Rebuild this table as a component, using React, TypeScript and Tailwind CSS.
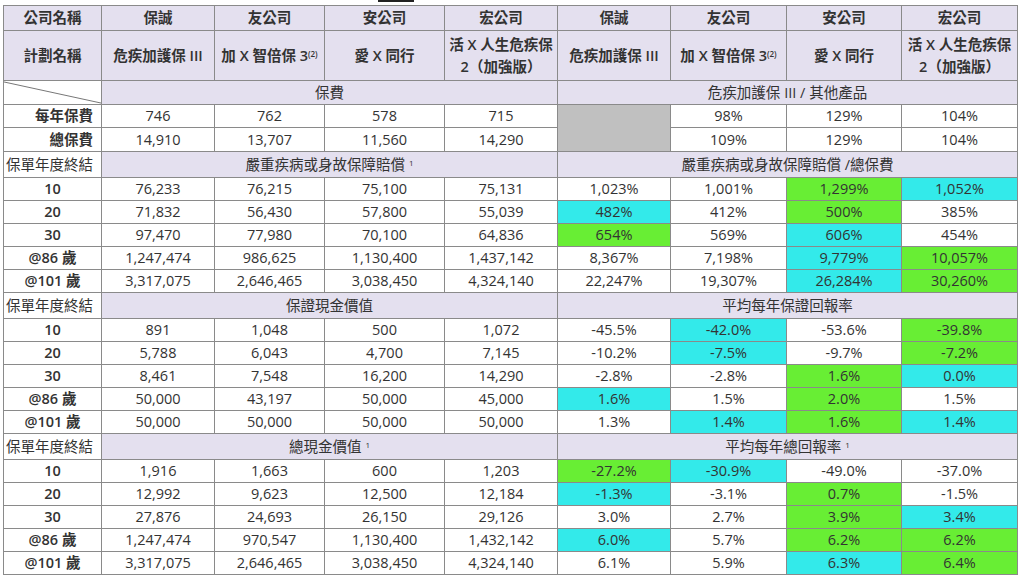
import React from "react";

type Tone = "c" | "g" | "";
type Row = { label: string; left: string[]; right: [string, Tone][] };

const CYAN = "bg-[#33eaea]";
const GREEN = "bg-[#68ee34]";

const sections: { title: string; rightTitle: string; sup?: boolean; rightSup?: boolean; rows: Row[] }[] = [
  {
    title: "嚴重疾病或身故保障賠償",
    sup: true,
    rightTitle: "嚴重疾病或身故保障賠償 /總保費",
    rows: [
      { label: "10", left: ["76,233", "76,215", "75,100", "75,131"], right: [["1,023%", ""], ["1,001%", ""], ["1,299%", "g"], ["1,052%", "c"]] },
      { label: "20", left: ["71,832", "56,430", "57,800", "55,039"], right: [["482%", "c"], ["412%", ""], ["500%", "g"], ["385%", ""]] },
      { label: "30", left: ["97,470", "77,980", "70,100", "64,836"], right: [["654%", "g"], ["569%", ""], ["606%", "c"], ["454%", ""]] },
      { label: "@86 歲", left: ["1,247,474", "986,625", "1,130,400", "1,437,142"], right: [["8,367%", ""], ["7,198%", ""], ["9,779%", "c"], ["10,057%", "g"]] },
      { label: "@101 歲", left: ["3,317,075", "2,646,465", "3,038,450", "4,324,140"], right: [["22,247%", ""], ["19,307%", ""], ["26,284%", "c"], ["30,260%", "g"]] },
    ],
  },
  {
    title: "保證現金價值",
    rightTitle: "平均每年保證回報率",
    rows: [
      { label: "10", left: ["891", "1,048", "500", "1,072"], right: [["-45.5%", ""], ["-42.0%", "c"], ["-53.6%", ""], ["-39.8%", "g"]] },
      { label: "20", left: ["5,788", "6,043", "4,700", "7,145"], right: [["-10.2%", ""], ["-7.5%", "c"], ["-9.7%", ""], ["-7.2%", "g"]] },
      { label: "30", left: ["8,461", "7,548", "16,200", "14,290"], right: [["-2.8%", ""], ["-2.8%", ""], ["1.6%", "g"], ["0.0%", "c"]] },
      { label: "@86 歲", left: ["50,000", "43,197", "50,000", "45,000"], right: [["1.6%", "c"], ["1.5%", ""], ["2.0%", "g"], ["1.5%", ""]] },
      { label: "@101 歲", left: ["50,000", "50,000", "50,000", "50,000"], right: [["1.3%", ""], ["1.4%", "c"], ["1.6%", "g"], ["1.4%", "c"]] },
    ],
  },
  {
    title: "總現金價值",
    sup: true,
    rightTitle: "平均每年總回報率",
    rightSup: true,
    rows: [
      { label: "10", left: ["1,916", "1,663", "600", "1,203"], right: [["-27.2%", "g"], ["-30.9%", "c"], ["-49.0%", ""], ["-37.0%", ""]] },
      { label: "20", left: ["12,992", "9,623", "12,500", "12,184"], right: [["-1.3%", "c"], ["-3.1%", ""], ["0.7%", "g"], ["-1.5%", ""]] },
      { label: "30", left: ["27,876", "24,693", "26,150", "29,126"], right: [["3.0%", ""], ["2.7%", ""], ["3.9%", "g"], ["3.4%", "c"]] },
      { label: "@86 歲", left: ["1,247,474", "970,547", "1,130,400", "1,432,142"], right: [["6.0%", "c"], ["5.7%", ""], ["6.2%", "g"], ["6.2%", "g"]] },
      { label: "@101 歲", left: ["3,317,075", "2,646,465", "3,038,450", "4,324,140"], right: [["6.1%", ""], ["5.9%", ""], ["6.3%", "c"], ["6.4%", "g"]] },
    ],
  },
];

const companies = ["保誠", "友公司", "安公司", "宏公司"];

const cell = "border border-[#8a8a8a] px-1 text-center align-middle";
const head = cell + " bg-[#e4e0ef]";

function Plans() {
  return (
    <>
      <td className={head}>危疾加護保 III</td>
      <td className={head}>
        加 X 智倍保 3<sup className="text-[8px]">(2)</sup>
      </td>
      <td className={head}>愛 X 同行</td>
      <td className={head + " leading-[22px]"}>
        活 X 人生危疾保
        <br />2（加強版）
      </td>
    </>
  );
}

export default function App() {
  return (
    <div
      className="h-[578px] w-[1024px] overflow-hidden bg-white pl-[3px] text-[14.5px] text-[#333]"
      style={{ fontFamily: '"Open Sans", "Noto Sans CJK TC", sans-serif' }}
    >
      <div className="h-[5px]">
        <div className="ml-[375px] h-[2px] w-[36px] bg-[#222]" />
      </div>
      <table className="w-[1014px] table-fixed border-collapse border border-[#7a7a7a]">
        <colgroup>
          <col className="w-[98px]" />
          <col className="w-[113px]" />
          <col className="w-[110px]" />
          <col className="w-[120px]" />
          <col className="w-[113px]" />
          <col className="w-[113px]" />
          <col className="w-[116px]" />
          <col className="w-[115px]" />
          <col className="w-[116px]" />
        </colgroup>
        <tbody>
          <tr className="h-[25px] font-semibold">
            <td className={head}>公司名稱</td>
            {companies.concat(companies).map((c, i) => (
              <td key={i} className={head}>
                {c}
              </td>
            ))}
          </tr>
          <tr className="h-[50px] font-semibold">
            <td className={head}>計劃名稱</td>
            <Plans />
            <Plans />
          </tr>
          <tr className="h-[24px]">
            <td className={cell + " relative bg-white p-0"}>
              <svg className="absolute inset-0 h-full w-full" viewBox="0 0 100 24" preserveAspectRatio="none">
                <line x1="0" y1="1" x2="100" y2="23" stroke="#777" strokeWidth="1" vectorEffect="non-scaling-stroke" />
              </svg>
            </td>
            <td colSpan={4} className={head}>
              保費
            </td>
            <td colSpan={4} className={head}>
              危疾加護保 III / 其他產品
            </td>
          </tr>
          <tr className="h-[23px]">
            <td className={cell + " pr-2 text-right font-semibold"}>每年保費</td>
            <td className={cell}>746</td>
            <td className={cell}>762</td>
            <td className={cell}>578</td>
            <td className={cell}>715</td>
            <td rowSpan={2} className={cell + " bg-[#c0c0c0]"} />
            <td className={cell}>98%</td>
            <td className={cell}>129%</td>
            <td className={cell}>104%</td>
          </tr>
          <tr className="h-[24px]">
            <td className={cell + " pr-2 text-right font-semibold"}>總保費</td>
            <td className={cell}>14,910</td>
            <td className={cell}>13,707</td>
            <td className={cell}>11,560</td>
            <td className={cell}>14,290</td>
            <td className={cell}>109%</td>
            <td className={cell}>129%</td>
            <td className={cell}>104%</td>
          </tr>
          {sections.map((s, si) => (
            <React.Fragment key={si}>
              <tr className="h-[26px]">
                <td className="border border-[#8a8a8a] bg-white pl-[2px] text-left whitespace-nowrap">保單年度終結</td>
                <td colSpan={4} className={head}>
                  {s.title}
                  {s.sup && <sup className="ml-1 text-[8px]">1</sup>}
                </td>
                <td colSpan={4} className={head}>
                  {s.rightTitle}
                  {s.rightSup && <sup className="ml-1 text-[8px]">1</sup>}
                </td>
              </tr>
              {s.rows.map((r, ri) => (
                <tr key={ri} className="h-[23px]">
                  <td className={cell + " font-semibold"}>{r.label}</td>
                  {r.left.map((v, i) => (
                    <td key={i} className={cell}>
                      {v}
                    </td>
                  ))}
                  {r.right.map(([v, t], i) => (
                    <td key={i} className={cell + (t === "c" ? " " + CYAN : t === "g" ? " " + GREEN : "")}>
                      {v}
                    </td>
                  ))}
                </tr>
              ))}
            </React.Fragment>
          ))}
        </tbody>
      </table>
    </div>
  );
}
